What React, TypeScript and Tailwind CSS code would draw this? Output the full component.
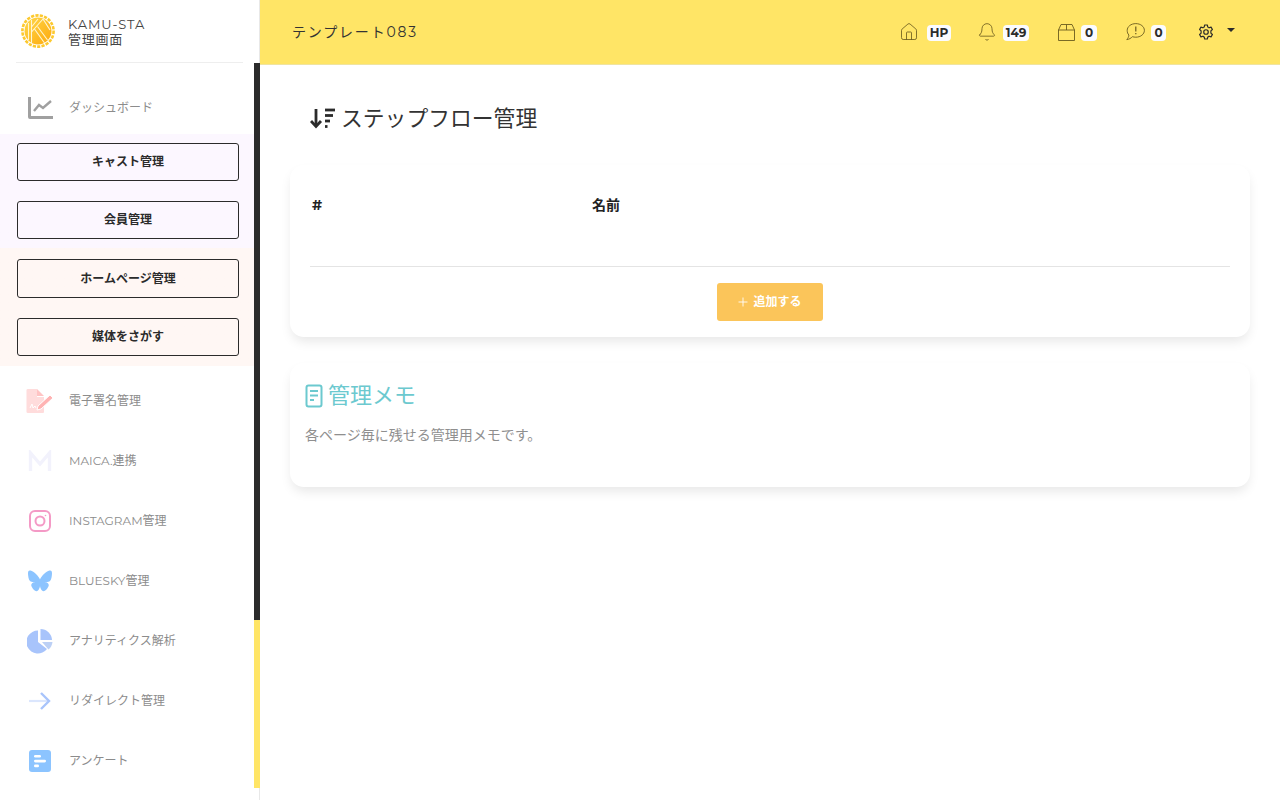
import { Home, Bell, Plus } from "lucide-react";

const jp = "font-['Montserrat','Inter','Noto_Sans_CJK_JP',sans-serif]";

function LogoMark() {
  return (
    <svg width="34" height="34" viewBox="0 0 34 34">
      <defs>
        <linearGradient id="logoGold" x1="0" y1="0" x2="1" y2="1">
          <stop offset="0" stopColor="#ffd84a" />
          <stop offset="1" stopColor="#fda90c" />
        </linearGradient>
      </defs>
      <circle cx="17" cy="17" r="15.6" fill="none" stroke="#fcc92f" strokeWidth="2.6" strokeDasharray="3.2 1.2" />
      <circle cx="17" cy="17" r="13.5" fill="url(#logoGold)" />
      <g stroke="#fff6d2" strokeWidth="1.1" fill="none">
        <path d="M7.5 9 V26" />
        <path d="M10.5 6 V29" />
        <path d="M10.5 18 L22 5" />
        <path d="M10.5 13 L17 5" />
        <path d="M13.5 15 L23.5 29" />
        <path d="M16.5 12.5 L26.5 26" />
        <path d="M22 5 L29 16" />
      </g>
    </svg>
  );
}

function ChartIcon() {
  return (
    <svg width="25" height="22" viewBox="0 0 25 22" fill="none" stroke="#a0a0a0" strokeWidth="3">
      <path d="M1.5 0 V20 Q1.5 20.5 2 20.5 H25" />
      <path d="M6 14 L11 8 L15 11 L23 4" strokeWidth="2.4" />
    </svg>
  );
}

function SignIcon() {
  return (
    <svg width="28" height="25" viewBox="0 0 28 25">
      <path d="M2 0 H11 V8 H18 V23 Q18 24 17 24 H2 Q0.5 24 0.5 23 V1 Q0.5 0 2 0 Z" fill="#ffdcdc" />
      <path d="M11 0 L18 7 H11 Z" fill="#ffc4c4" />
      <path d="M12 17 L24 6 L27 9 L15 20 L11 21 Z" fill="#ffb3b3" stroke="#fff" strokeWidth="1" />
      <path d="M4 19 L6 15 L7 19 L9 17 L10 19" fill="none" stroke="#fff" strokeWidth="1" />
    </svg>
  );
}

function MaicaIcon() {
  return (
    <svg width="24" height="22" viewBox="0 0 24 22" fill="none" stroke="#f2f2fc" strokeWidth="3.4">
      <path d="M2.5 21 V3 L12 14 L21.5 3 V21" />
    </svg>
  );
}

function InstagramIcon() {
  return (
    <svg width="22" height="22" viewBox="0 0 22 22" fill="none" stroke="#f49ac6" strokeWidth="2">
      <rect x="1" y="1" width="20" height="20" rx="5" />
      <circle cx="11" cy="11" r="4.5" />
      <circle cx="16.5" cy="5.5" r="0.8" fill="#f49ac6" stroke="none" />
    </svg>
  );
}

function ButterflyIcon() {
  return (
    <svg width="24" height="22" viewBox="0 0 24 22" fill="#8cc4ff">
      <path d="M12 9.5 C10.5 6 6 1.5 2.5 0.6 C0.6 0.2 0 1.4 0 3.4 C0 5.5 0.6 9.5 1.8 10.8 C3.2 12.2 5.5 12.3 7 12 C4.4 12.5 2.4 13.8 3.6 16.6 C5 19.8 8 22.5 10 20.5 C11.2 19.2 11.8 17.5 12 16 C12.2 17.5 12.8 19.2 14 20.5 C16 22.5 19 19.8 20.4 16.6 C21.6 13.8 19.6 12.5 17 12 C18.5 12.3 20.8 12.2 22.2 10.8 C23.4 9.5 24 5.5 24 3.4 C24 1.4 23.4 0.2 21.5 0.6 C18 1.5 13.5 6 12 9.5 Z" />
    </svg>
  );
}

function PieIcon() {
  return (
    <svg width="26" height="25" viewBox="0 0 26 25" fill="#a8c4fb">
      <path d="M11 1.5 A11.5 11.5 0 1 0 20 20 L11 13 Z" />
      <path d="M13.5 0 A11.5 11.5 0 0 1 25 11 H13.5 Z" />
      <path d="M15 13 H25.5 A11.5 11.5 0 0 1 21.5 20.5 Z" fill="#bcd0f5" />
    </svg>
  );
}

function ArrowIcon() {
  return (
    <svg width="22" height="18" viewBox="0 0 22 18" fill="none">
      <path d="M0 9 H19" stroke="#dbe6fd" strokeWidth="2.2" />
      <path d="M12 1 L20 9 L12 17" stroke="#a8c4fb" strokeWidth="2.4" />
    </svg>
  );
}

function FormIcon() {
  return (
    <svg width="22" height="22" viewBox="0 0 22 22">
      <rect width="22" height="22" rx="3" fill="#8cc4ff" />
      <rect x="5" y="5" width="7" height="2.6" rx="1.3" fill="#fff" />
      <rect x="5" y="9.8" width="12" height="2.6" rx="1.3" fill="#fff" />
      <rect x="5" y="14.6" width="5" height="2.6" rx="1.3" fill="#fff" />
    </svg>
  );
}

function SortIcon() {
  return (
    <svg width="25" height="21" viewBox="0 0 25 21" fill="none" stroke="#2b2b2b" strokeWidth="2.8">
      <path d="M6 1 V18" />
      <path d="M1 13 L6 18.5 L11 13" />
      <path d="M15 2 H25" />
      <path d="M15 7.5 H23" />
      <path d="M15 13 H20" />
      <path d="M15 18.5 H17.5" />
    </svg>
  );
}

function MemoIcon() {
  return (
    <svg width="18" height="24" viewBox="0 0 18 24" fill="none" stroke="#6cc9cf" strokeWidth="2">
      <rect x="1.5" y="1.5" width="15" height="21" rx="2" />
      <path d="M5 7 H13 M5 11.5 H13 M5 16 H9" />
    </svg>
  );
}

function BoxIcon() {
  return (
    <svg width="17" height="17" viewBox="0 0 17 17" fill="none" stroke="#6b5b1e" strokeWidth="0.9">
      <path d="M0.5 6 L3 0.5 H14 L16.5 6 V16.5 H0.5 Z" />
      <path d="M0.5 6 H16.5" />
      <path d="M8.5 0.5 V6" />
    </svg>
  );
}

function MessageIcon() {
  return (
    <svg width="19" height="18" viewBox="0 0 19 18" fill="none" stroke="#6b5b1e" strokeWidth="0.9">
      <path d="M9.8 0.6 C14.6 0.6 18.4 3.6 18.4 7.4 C18.4 11.2 14.6 14.2 9.8 14.2 C8.6 14.2 7.5 14 6.4 13.7 C5 15.2 3.2 16.3 0.8 16.6 C2 15.2 2.8 13.8 2.9 12 C1.7 10.8 1.2 9.2 1.2 7.4 C1.2 3.6 5 0.6 9.8 0.6 Z" />
      <path d="M9.8 3.6 V8.6" strokeWidth="1.2" />
      <path d="M9.8 10 V11.2" strokeWidth="1.2" />
    </svg>
  );
}

function GearIcon() {
  return (
    <svg width="16" height="16" viewBox="0 0 24 24" fill="none" stroke="#2b2b2b" strokeWidth="1.8" strokeLinejoin="round">
      <path d="M10 1.5 H14 L14.7 4.6 C15.4 4.9 16 5.2 16.6 5.7 L19.6 4.7 L21.6 8.2 L19.3 10.3 C19.4 11.1 19.4 12.9 19.3 13.7 L21.6 15.8 L19.6 19.3 L16.6 18.3 C16 18.8 15.4 19.1 14.7 19.4 L14 22.5 H10 L9.3 19.4 C8.6 19.1 8 18.8 7.4 18.3 L4.4 19.3 L2.4 15.8 L4.7 13.7 C4.6 12.9 4.6 11.1 4.7 10.3 L2.4 8.2 L4.4 4.7 L7.4 5.7 C8 5.2 8.6 4.9 9.3 4.6 Z" />
      <circle cx="12" cy="12" r="3.4" />
    </svg>
  );
}

const topLinks = ["キャスト管理", "会員管理", "ホームページ管理", "媒体をさがす"];

const navItems = [
  { label: "電子署名管理", icon: <SignIcon /> },
  { label: "MAICA.連携", icon: <MaicaIcon /> },
  { label: "INSTAGRAM管理", icon: <InstagramIcon /> },
  { label: "BLUESKY管理", icon: <ButterflyIcon /> },
  { label: "アナリティクス解析", icon: <PieIcon /> },
  { label: "リダイレクト管理", icon: <ArrowIcon /> },
  { label: "アンケート", icon: <FormIcon /> },
];

function NavRow({ icon, label }: { icon: React.ReactNode; label: string }) {
  return (
    <div className="flex h-[60px] items-center">
      <div className="flex w-[69px] justify-center pl-[11px]">{icon}</div>
      <span className="text-[12px] text-[#8c8c8c]">{label}</span>
    </div>
  );
}

function Badge({ children, width }: { children: React.ReactNode; width: string }) {
  return (
    <span className={`mt-[2px] rounded-[4px] bg-[#fbfbff] text-center text-[12px] leading-[16px] font-bold text-[#2b2b2b] ${width}`}>
      {children}
    </span>
  );
}

export default function App() {
  return (
    <div className={`flex h-[800px] w-[1280px] overflow-hidden bg-white ${jp}`}>
      {/* Sidebar */}
      <aside className="relative h-full w-[260px] shrink-0 border-r border-[#e8e8e8]">
        <div className="absolute top-[63px] right-[-1px] h-[557px] w-[6px] bg-[#2b2b2b]" />
        <div className="absolute top-[620px] right-[-1px] h-[168px] w-[6px] bg-[#ffe566]" />

        <div className="mx-4 flex h-[63px] items-center gap-[13px] border-b border-[#eeeeee] pb-[1px] pl-[5px]">
          <LogoMark />
          <div className="pt-[2px] text-[13px] leading-[15px] tracking-[0.06em] text-[#444]">
            <div className="tracking-[0.07em]">KAMU-STA</div>
            <div>管理画面</div>
          </div>
        </div>

        <div className="flex h-[71px] items-center pt-[18px]">
          <div className="flex w-[69px] justify-center pl-[11px]">
            <ChartIcon />
          </div>
          <span className="text-[12px] text-[#8c8c8c]">ダッシュボード</span>
        </div>

        <div className="flex h-[232px] w-[254px] flex-col bg-gradient-to-b from-[#fcf7ff] from-[49%] to-[#fff7f4] to-[49%] pt-[9px] pl-[17px]">
          {topLinks.map((label, i) => (
            <div
              key={label}
              className={`flex w-[222px] items-center justify-center rounded-[3px] border border-[#2b2b2b] text-[12px] font-bold text-[#2b2b2b] ${
                i === 2 ? "mb-[20px] h-[39px]" : i === 3 ? "h-[38px]" : "mb-[20px] h-[38px]"
              }`}
            >
              {label}
            </div>
          ))}
        </div>

        <div className="pt-[5px]">
          {navItems.map((item) => (
            <NavRow key={item.label} icon={item.icon} label={item.label} />
          ))}
        </div>
      </aside>

      <div className="flex min-w-0 flex-1 flex-col">
        {/* Header */}
        <header className="flex h-[65px] shrink-0 items-center justify-between border-b border-[#f0e4a0] bg-[#ffe566] pr-[45px] pl-[32px]">
          <span className="pt-[1px] text-[14px] tracking-[0.13em] text-[#333]">テンプレート083</span>
          <div className="flex items-center text-[#6b5b1e]">
            <div className="flex items-center gap-[8px]">
              <Home size={20} strokeWidth={1} />
              <Badge width="w-[24px]">HP</Badge>
            </div>
            <div className="ml-[26px] flex items-center gap-[6px]">
              <Bell size={20} strokeWidth={1} />
              <Badge width="w-[26px]">149</Badge>
            </div>
            <div className="ml-[29px] flex items-center gap-[6px]">
              <BoxIcon />
              <Badge width="w-[16px]">0</Badge>
            </div>
            <div className="ml-[29px] flex items-center gap-[6px]">
              <MessageIcon />
              <Badge width="w-[15px]">0</Badge>
            </div>
            <div className="ml-[32px] flex items-center gap-[13px]">
              <GearIcon />
              <span className="mb-[5px] border-x-[4px] border-t-[4px] border-x-transparent border-t-[#2b2b2b]" />
            </div>
          </div>
        </header>

        {/* Content */}
        <main className="flex-1 px-[30px]">
          <h1 className="flex h-[100px] items-center gap-[6px] pt-[6px] pl-[20px] text-[21.8px] font-normal text-[#333]">
            <SortIcon />
            ステップフロー管理
          </h1>

          <section className="rounded-[14px] bg-white px-[20px] shadow-[0_6px_12px_-2px_rgba(0,0,0,0.1)]">
            <div className="flex h-[102px] border-b border-[#e4e4e4] pt-[32px] text-[14px] leading-[16px] font-bold text-[#222]">
              <div className="w-[282px] pl-[2px]">#</div>
              <div>名前</div>
            </div>
            <div className="flex justify-center pt-[16px] pb-[16px]">
              <div className="flex h-[38px] w-[106px] items-center justify-center gap-[3px] rounded-[3px] bg-[#fbc55a] pr-[2px] text-[12px] font-bold text-white">
                <Plus size={14} strokeWidth={1.5} />
                追加する
              </div>
            </div>
          </section>

          <section className="mt-[26px] h-[124px] rounded-[14px] bg-white px-[15px] pt-[20px] shadow-[0_6px_12px_-2px_rgba(0,0,0,0.1)]">
            <div className="flex items-center gap-[5px] text-[22px] leading-[26px] text-[#6cc9cf]">
              <MemoIcon />
              管理メモ
            </div>
            <p className="mt-[16px] text-[14px] leading-[20px] text-[#8f8f8f]">各ページ毎に残せる管理用メモです。</p>
          </section>
        </main>
      </div>
    </div>
  );
}
